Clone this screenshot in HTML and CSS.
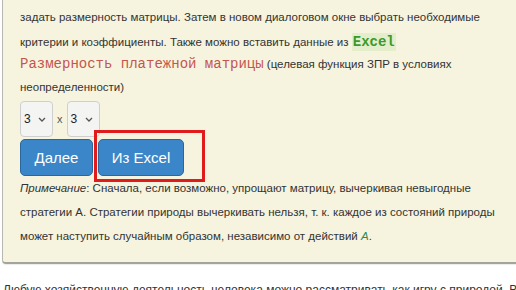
FILE: index.html
```html
<!DOCTYPE html>
<html lang="ru">
<head>
<meta charset="utf-8">
<link rel="stylesheet" href="styles.css">
</head>
<body>
<div class="panel">
  <p class="intro">задать размерность матрицы. Затем в новом диалоговом окне выбрать необходимые критерии и коэффициенты. Также можно вставить данные из <code class="excel">Excel</code></p>
  <p class="label"><span class="mono">Размерность платежной матрицы</span> (целевая функция ЗПР в условиях неопределенности)</p>
  <div class="dims">
    <div class="sel"><span>3</span><svg width="8" height="5" viewBox="0 0 8 5"><path d="M1 1l3 3 3-3" fill="none" stroke="#555" stroke-width="1.3"/></svg></div>
    <span class="times">x</span>
    <div class="sel"><span>3</span><svg width="8" height="5" viewBox="0 0 8 5"><path d="M1 1l3 3 3-3" fill="none" stroke="#555" stroke-width="1.3"/></svg></div>
  </div>
  <div class="actions">
    <button class="btn next">Далее</button>
    <div class="excel-wrap">
      <button class="btn import">Из Excel</button>
      <div class="highlight"></div>
    </div>
  </div>
  <p class="note"><i>Примечание</i>: Сначала, если возможно, упрощают матрицу, вычеркивая невыгодные стратегии A. Стратегии природы вычеркивать нельзя, т. к. каждое из состояний природы может наступить случайным образом, независимо от действий <i class="green">A</i>.</p>
</div>
<p class="after">Любую хозяйственную деятельность человека можно рассматривать как игру с природой. В</p>
</body>
</html>
```
FILE: styles.css
```css
html, body {
  margin: 0;
  padding: 0;
  background: #fff;
  overflow: hidden;
  width: 516px;
  height: 290px;
}
body {
  font-family: "Liberation Sans", Arial, sans-serif;
  color: #333;
  font-size: 11.5px;
}
.panel {
  margin: -20px 0 0 2px;
  width: 540px;
  box-sizing: border-box;
  background: #f6f4de;
  border: 1px solid #b8b8b0;
  border-bottom: 2px solid #a4a49c;
  border-radius: 4px;
  padding: 24px 30px 14px 17px;
  box-shadow: 0 1px 1px rgba(0,0,0,0.08);
}
.panel p { margin: 0; }
.intro {
  line-height: 25px;
  width: 490px;
}
.excel {
  font-family: "Liberation Mono", "Courier New", monospace;
  font-weight: bold;
  font-size: 14px;
  color: #3a9a2a;
  background: #e4eecb;
  padding: 1px 1px;
}
.label {
  line-height: 23px;
  width: 490px;
  margin-top: -2px !important;
}
.mono {
  font-family: "Liberation Mono", "Courier New", monospace;
  color: #c4564f;
  font-size: 14px;
}
.dims {
  display: flex;
  align-items: center;
  gap: 3px;
  margin-top: 2px;
  height: 36px;
}
.sel {
  width: 33px;
  height: 36px;
  box-sizing: border-box;
  border: 1px solid #cfcfcf;
  border-radius: 4px;
  background: #f4f4f2;
  display: flex;
  align-items: center;
  justify-content: space-between;
  padding: 0 6px 0 3px;
  font-size: 12px;
  color: #222;
}
.sel svg { margin-top: 1px; }
.times { font-size: 11px; color: #555; padding: 0 1px; }
.actions {
  display: flex;
  gap: 5px;
  margin-top: 2px;
}
.btn {
  font-family: "Liberation Sans", Arial, sans-serif;
  font-size: 15px;
  color: #fff;
  background: #3a86c8;
  border: 1px solid #2b679c;
  border-radius: 5px;
  height: 37px;
  padding: 0;
  white-space: nowrap;
  display: block;
}
.next { width: 73px; }
.import { width: 86px; }
.excel-wrap { position: relative; }
.highlight {
  position: absolute;
  left: -4px;
  top: -9px;
  width: 111px;
  height: 52px;
  box-sizing: border-box;
  border: 3px solid #e01b1b;
  pointer-events: none;
}
.note {
  line-height: 24px;
  width: 492px;
}
.green { color: #2e8b57; }
.after {
  margin: 19px 0 0 3px;
  font-size: 12px;
  color: #333;
  white-space: nowrap;
}
```
